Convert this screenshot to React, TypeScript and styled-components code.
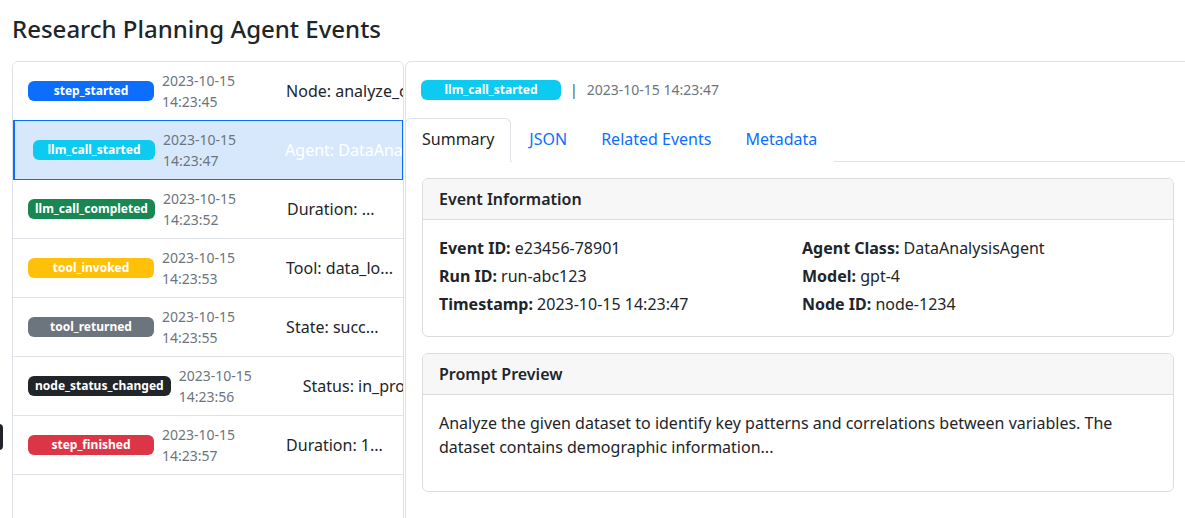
import * as React from "react";
import styled, { createGlobalStyle } from "styled-components";

type Variant =
  | "primary"
  | "info"
  | "success"
  | "warning"
  | "secondary"
  | "dark"
  | "danger";

const badgeColors: Record<Variant, string> = {
  primary: "#0d6efd",
  info: "#0dcaf0",
  success: "#198754",
  warning: "#ffc107",
  secondary: "#6c757d",
  dark: "#212529",
  danger: "#dc3545",
};

type AgentEvent = {
  type: string;
  variant: Variant;
  time: string;
  detail: string;
};

const events: AgentEvent[] = [
  { type: "step_started", variant: "primary", time: "2023-10-15 14:23:45", detail: "Node: analyze_customer_data" },
  { type: "llm_call_started", variant: "info", time: "2023-10-15 14:23:47", detail: "Agent: DataAnalysisAgent" },
  { type: "llm_call_completed", variant: "success", time: "2023-10-15 14:23:52", detail: "Duration: ..." },
  { type: "tool_invoked", variant: "warning", time: "2023-10-15 14:23:53", detail: "Tool: data_lo..." },
  { type: "tool_returned", variant: "secondary", time: "2023-10-15 14:23:55", detail: "State: succ..." },
  { type: "node_status_changed", variant: "dark", time: "2023-10-15 14:23:56", detail: "Status: in_progress" },
  { type: "step_finished", variant: "danger", time: "2023-10-15 14:23:57", detail: "Duration: 1..." },
];

const GlobalStyle = createGlobalStyle`
  html, body {
    margin: 0;
    overflow: hidden;
    background: #fff;
  }
  body {
    font-family: "Noto Sans", "Open Sans", sans-serif;
    font-size: 16px;
    line-height: 1.5;
    color: #212529;
  }
  * { box-sizing: border-box; }
`;

const Page = styled.div`
  position: relative;
  padding: 15px 12px 0;
  height: 518px;
`;

const Title = styled.h4`
  margin: 0 0 17px;
  font-size: 24px;
  font-weight: 500;
  line-height: 1.2;
`;

const Layout = styled.div`
  display: flex;
  gap: 1px;
`;

const EventList = styled.div`
  flex: 0 0 392px;
  height: 470px;
  border: 1px solid #dee2e6;
  border-radius: 6px;
  overflow: hidden;
`;

const EventRow = styled.div<{ $active?: boolean }>`
  display: flex;
  align-items: center;
  padding: 8px 16px 8px ${(p) => (p.$active ? "18px" : "15px")};
  border-bottom: 1px solid #dee2e6;
  background: ${(p) => (p.$active ? "#d8e8fc" : "#fff")};
  color: ${(p) => (p.$active ? "#fff" : "#212529")};
  ${(p) =>
    p.$active &&
    `
    margin-top: -1px;
    border: 1px solid #0d6efd;
    border-left-width: 2px;
  `}
`;

const Badge = styled.span<{ $variant: Variant; $min?: number }>`
  display: inline-block;
  flex: none;
  min-width: ${(p) => (p.$min ? `${p.$min}px` : "auto")};
  padding: 4px 7px;
  border-radius: 6px;
  background: ${(p) => badgeColors[p.$variant]};
  color: #fff;
  font-size: 12px;
  font-weight: 700;
  line-height: 12px;
  text-align: center;
  white-space: nowrap;
`;

const Stamp = styled.small`
  flex: none;
  margin-left: 8px;
  font-size: 14px;
  line-height: 21px;
  color: #6c757d;
`;

const StampLine = styled.span`
  display: block;
  white-space: nowrap;
`;

const Detail = styled.span<{ $active?: boolean }>`
  flex: none;
  margin-left: ${(p) => (p.$active ? "49px" : "51px")};
  white-space: nowrap;
`;

const DetailPanel = styled.div`
  flex: 0 0 786px;
  height: 470px;
  border: 1px solid #dee2e6;
  border-radius: 6px;
`;

const PanelHeader = styled.div`
  display: flex;
  align-items: center;
  padding: 16px 15px;
  height: 56px;
`;

const Divider = styled.span`
  margin: 0 9px 0 9px;
  color: #495057;
  font-size: 14px;
`;

const HeaderStamp = styled.span`
  font-size: 14px;
  color: #6c757d;
`;

const Tabs = styled.div`
  display: flex;
  border-bottom: 1px solid #dee2e6;
`;

const Tab = styled.div<{ $active?: boolean }>`
  margin-bottom: -1px;
  padding: 8px 16px 10px;
  border: 1px solid ${(p) => (p.$active ? "#dee2e6" : "transparent")};
  border-bottom-color: ${(p) => (p.$active ? "#fff" : "transparent")};
  border-radius: 6px 6px 0 0;
  background: #fff;
  color: ${(p) => (p.$active ? "#212529" : "#0d6efd")};
  line-height: 24px;

  &:first-child {
    margin-left: -1px;
    margin-right: 1px;
  }
`;

const TabBody = styled.div`
  padding: 16px;
`;

const Card = styled.div`
  border: 1px solid #dcdcdc;
  border-radius: 6px;
  margin-bottom: 16px;
  overflow: hidden;
`;

const CardHeader = styled.div`
  padding: 8px 16px;
  background: #f7f7f8;
  border-bottom: 1px solid #dcdcdc;
  font-weight: 600;
`;

const CardBody = styled.div`
  padding: 16px;
`;

const InfoGrid = styled.div`
  display: grid;
  grid-template-columns: 1fr 1fr;
  column-gap: 8px;
`;

const InfoLine = styled.p`
  margin: 0 0 4px;
`;

const Label = styled.strong`
  font-weight: 700;
`;

const Paragraph = styled.p`
  margin: 0 0 16px;
`;

const EdgeTip = styled.div`
  position: absolute;
  left: -20px;
  top: 424px;
  width: 23px;
  height: 26px;
  border-radius: 4px;
  background: #212529;
`;

const infoLeft: [string, string][] = [
  ["Event ID:", "e23456-78901"],
  ["Run ID:", "run-abc123"],
  ["Timestamp:", "2023-10-15 14:23:47"],
];

const infoRight: [string, string][] = [
  ["Agent Class:", "DataAnalysisAgent"],
  ["Model:", "gpt-4"],
  ["Node ID:", "node-1234"],
];

const App: React.FC = () => {
  const activeIndex = 1;
  const active = events[activeIndex];

  return (
    <>
      <GlobalStyle />
      <Page>
        <Title>Research Planning Agent Events</Title>
        <Layout>
          <EventList>
            {events.map((ev, i) => {
              const [date, clock] = ev.time.split(" ");
              const isActive = i === activeIndex;
              return (
                <EventRow key={ev.type} $active={isActive}>
                  <Badge $variant={ev.variant} $min={isActive ? 122 : 126}>
                    {ev.type}
                  </Badge>
                  <Stamp>
                    <StampLine>{date}</StampLine>
                    <StampLine>{clock}</StampLine>
                  </Stamp>
                  <Detail $active={isActive}>{ev.detail}</Detail>
                </EventRow>
              );
            })}
          </EventList>

          <DetailPanel>
            <PanelHeader>
              <Badge $variant={active.variant} $min={140}>
                {active.type}
              </Badge>
              <Divider>|</Divider>
              <HeaderStamp>{active.time}</HeaderStamp>
            </PanelHeader>

            <Tabs>
              <Tab $active>Summary</Tab>
              <Tab>JSON</Tab>
              <Tab>Related Events</Tab>
              <Tab>Metadata</Tab>
            </Tabs>

            <TabBody>
              <Card>
                <CardHeader>Event Information</CardHeader>
                <CardBody>
                  <InfoGrid>
                    <div>
                      {infoLeft.map(([k, v]) => (
                        <InfoLine key={k}>
                          <Label>{k}</Label> {v}
                        </InfoLine>
                      ))}
                    </div>
                    <div>
                      {infoRight.map(([k, v]) => (
                        <InfoLine key={k}>
                          <Label>{k}</Label> {v}
                        </InfoLine>
                      ))}
                    </div>
                  </InfoGrid>
                </CardBody>
              </Card>

              <Card>
                <CardHeader>Prompt Preview</CardHeader>
                <CardBody>
                  <Paragraph>
                    Analyze the given dataset to identify key patterns and
                    correlations between variables. The dataset contains
                    demographic information...
                  </Paragraph>
                </CardBody>
              </Card>
            </TabBody>
          </DetailPanel>
        </Layout>
        <EdgeTip />
      </Page>
    </>
  );
};

export default App;
